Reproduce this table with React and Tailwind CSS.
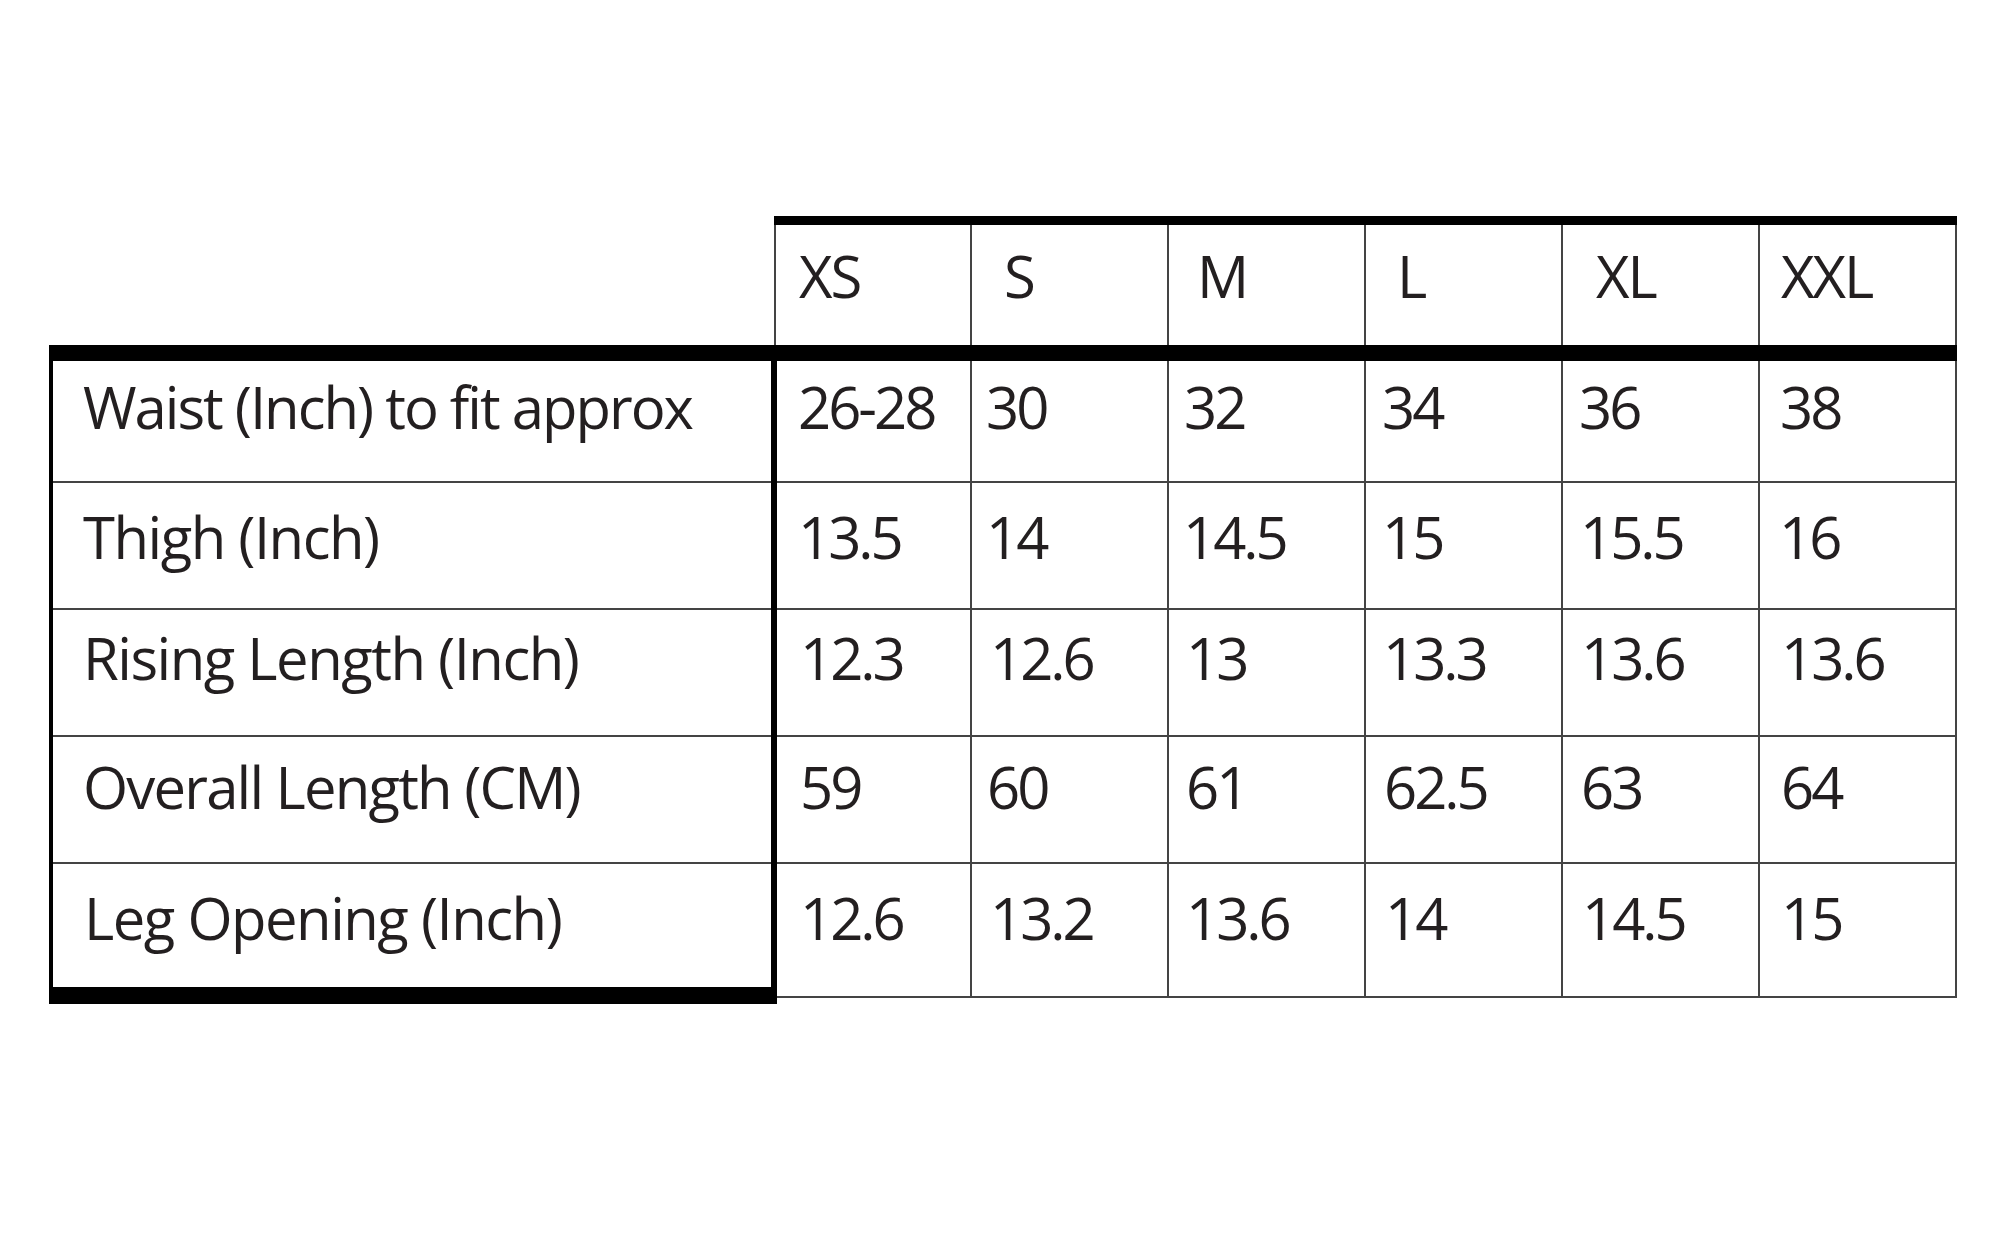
import React from "react";

// size chart: header row of sizes, then measurement rows
const sizes = [
  ["XS", "w-[198px] border-l-2 pl-[23px]"],
  ["S", "w-[197px] pl-[32px]"],
  ["M", "w-[197px] pl-[28px]"],
  ["L", "w-[197px] pl-[31px]"],
  ["XL", "w-[197px] pl-[33px]"],
  ["XXL", "w-[197px] pl-[21px]"],
];

const rows = [
  {
    label: "Waist (Inch) to fit approx",
    lp: "pl-[30px] tracking-[-2px]",
    h: "h-[122px] border-b-2",
    rh: "h-[122px]",
    pt: "pt-[17px]",
    cells: [
      ["26-28", "pl-[21px]"],
      ["30", "pl-[14px]"],
      ["32", "pl-[15px]"],
      ["34", "pl-[16px]"],
      ["36", "pl-[16px]"],
      ["38", "pl-[20px]"],
    ],
  },
  {
    label: "Thigh (Inch)",
    lp: "pl-[30px] tracking-[-1.5px]",
    h: "h-[127px] border-b-2",
    rh: "h-[127px]",
    pt: "pt-[25px]",
    cells: [
      ["13.5", "pl-[21px]"],
      ["14", "pl-[14px]"],
      ["14.5", "pl-[14px]"],
      ["15", "pl-[16px]"],
      ["15.5", "pl-[17px]"],
      ["16", "pl-[19px]"],
    ],
  },
  {
    label: "Rising Length (Inch)",
    lp: "pl-[30px] tracking-[-1.5px]",
    h: "h-[127px] border-b-2",
    rh: "h-[127px]",
    pt: "pt-[19px]",
    cells: [
      ["12.3", "pl-[23px]"],
      ["12.6", "pl-[18px]"],
      ["13", "pl-[17px]"],
      ["13.3", "pl-[17px]"],
      ["13.6", "pl-[18px]"],
      ["13.6", "pl-[21px]"],
    ],
  },
  {
    label: "Overall Length (CM)",
    lp: "pl-[30px] tracking-[-1.8px]",
    h: "h-[127px] border-b-2",
    rh: "h-[127px]",
    pt: "pt-[21px]",
    cells: [
      ["59", "pl-[23px]"],
      ["60", "pl-[15px]"],
      ["61", "pl-[17px]"],
      ["62.5", "pl-[18px]"],
      ["63", "pl-[18px]"],
      ["64", "pl-[21px]"],
    ],
  },
  {
    label: "Leg Opening (Inch)",
    lp: "pl-[31px] tracking-[-1.5px]",
    h: "h-[123px]",
    rh: "h-[134px]",
    pt: "pt-[25px]",
    cells: [
      ["12.6", "pl-[23px]"],
      ["13.2", "pl-[18px]"],
      ["13.6", "pl-[17px]"],
      ["14", "pl-[19px]"],
      ["14.5", "pl-[19px]"],
      ["15", "pl-[21px]"],
    ],
  },
];

export default function App() {
  return (
    <div className="min-h-screen w-full bg-white pt-[216px] pl-[49px] font-['Open_Sans',sans-serif] text-[58px] leading-none tracking-[-2px] text-[#231f20]">
      {/* header sizes */}
      <div className="ml-[725px] flex w-[1183px] border-t-[9px] border-black">
        {sizes.map(([s, cls]) => (
          <div key={s} className={`h-[120px] border-r-2 border-[#444] pt-[22px] ${cls}`}>
            {s}
          </div>
        ))}
      </div>
      <div className="h-[16px] w-[1908px] bg-black" />

      <div className="flex">
        {/* labels */}
        <div className="w-[728px] border-l-4 border-r-[6px] border-b-[17px] border-black">
          {rows.map((r) => (
            <div key={r.label} className={`${r.h} border-[#444] ${r.pt} ${r.lp} whitespace-nowrap`}>
              {r.label}
            </div>
          ))}
        </div>

        {/* values */}
        <div className="flex flex-col tracking-[-3px]">
          {rows.map((r) => (
            <div key={r.label} className={`flex ${r.rh} border-b-2 border-[#444]`}>
              {r.cells.map(([v, cls], i) => (
                <div
                  key={i}
                  className={`${i === 0 ? "w-[195px]" : "w-[197px]"} border-r-2 border-[#444] ${r.pt} ${cls}`}
                >
                  {v}
                </div>
              ))}
            </div>
          ))}
        </div>
      </div>
    </div>
  );
}
